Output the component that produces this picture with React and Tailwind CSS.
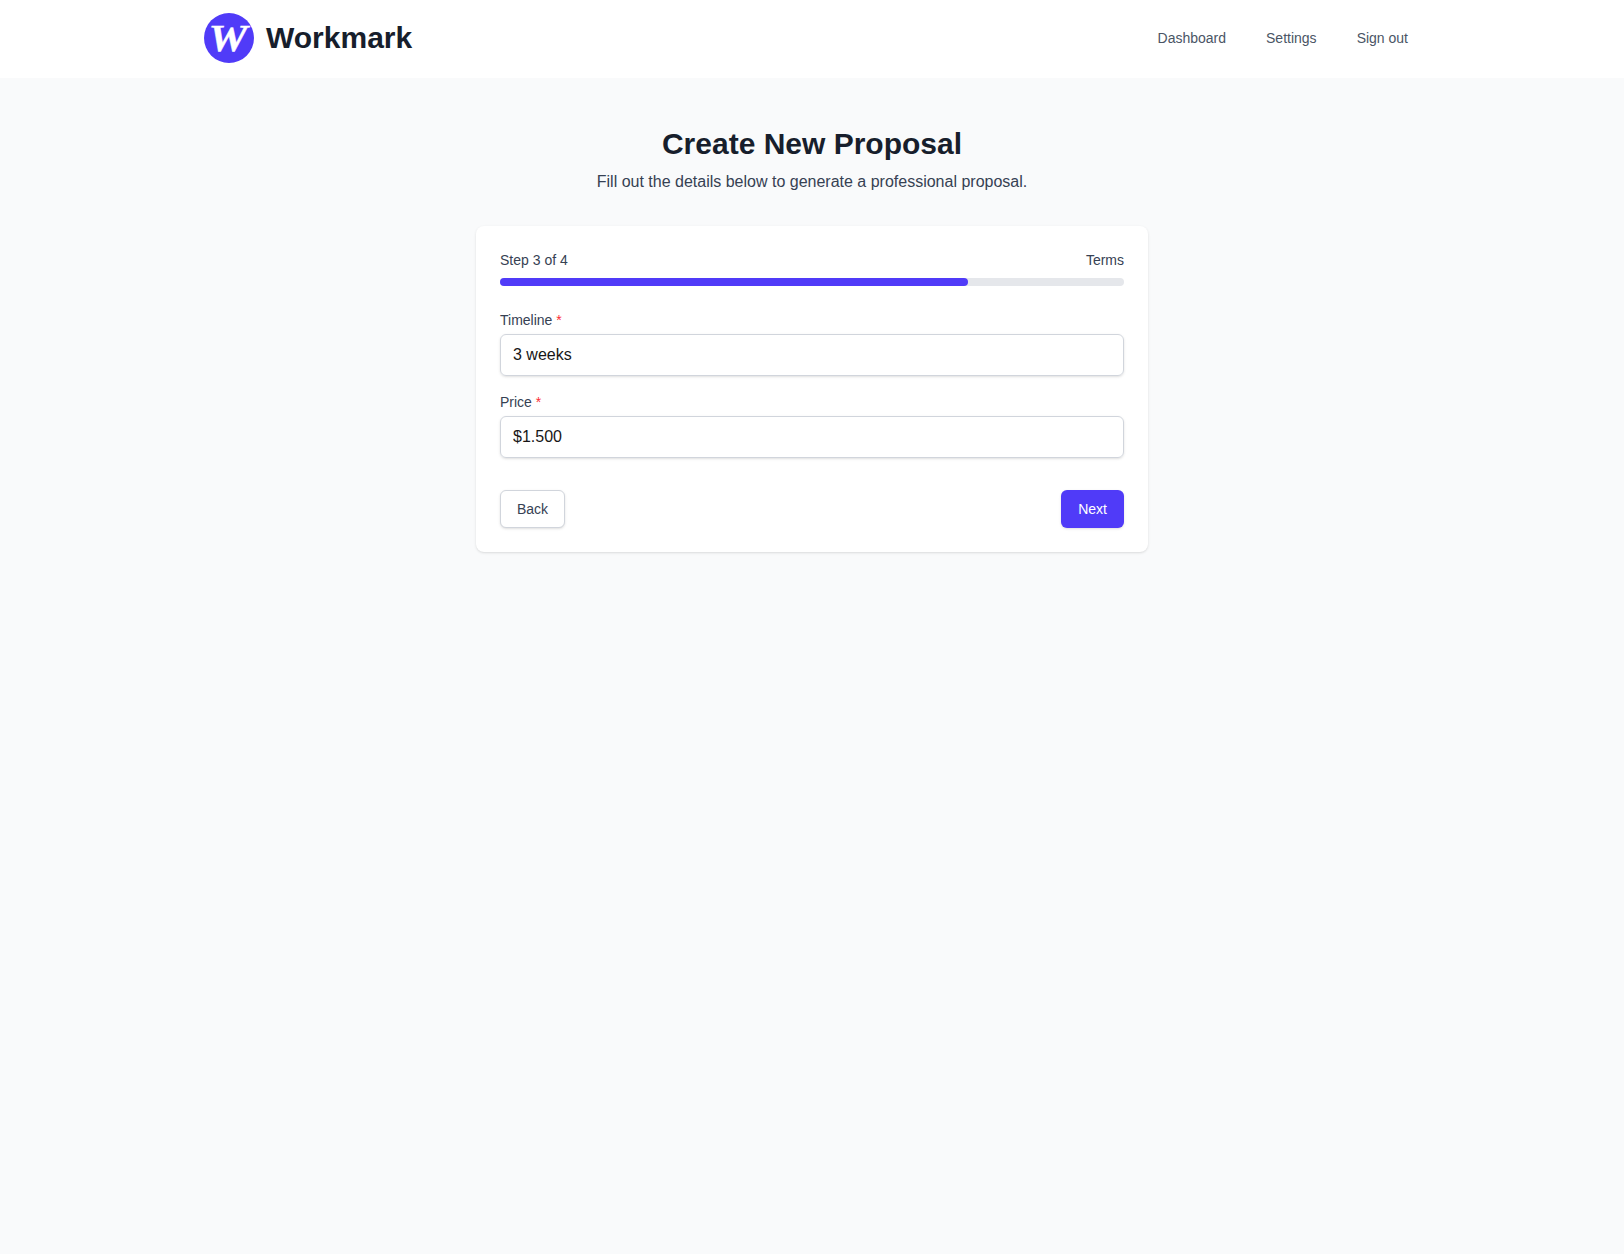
import { useState } from 'react'

const steps = ['Client', 'Project', 'Terms', 'Review']
const links = ['Dashboard', 'Settings', 'Sign out']

function Logo() {
  return (
    <svg width="50" height="50" viewBox="0 0 50 50" className="shrink-0">
      <circle cx="25" cy="25" r="25" fill="#503bf8" />
      <text
        x="4.6"
        y="38.3"
        fill="#fff"
        stroke="#fff"
        strokeWidth="0.4"
        fontFamily="'Liberation Serif', serif"
        fontSize="37.5"
        fontWeight="700"
        fontStyle="italic"
        textLength="38.8"
        lengthAdjust="spacingAndGlyphs"
      >
        W
      </text>
    </svg>
  )
}

function Navbar() {
  return (
    <nav className="bg-white">
      <div className="mx-auto flex h-[78px] max-w-7xl items-center justify-between px-8 pb-0.5">
        <div className="flex items-center gap-3">
          <Logo />
          <span className="text-3xl font-bold text-[#171e2c]">Workmark</span>
        </div>
        <div className="flex gap-4">
          {links.map((link) => (
            <a key={link} href="#" className="px-3 py-2 text-sm text-gray-600">{link}</a>
          ))}
        </div>
      </div>
    </nav>
  )
}

function Field({ label, value, onChange }) {
  return (
    <label className="block">
      <span className="block text-sm text-gray-700">
        {label} <span className="text-red-500">*</span>
      </span>
      <input
        type="text"
        value={value}
        onChange={(e) => onChange(e.target.value)}
        className="mt-1 block w-full rounded-md border border-gray-300 px-3 py-2 text-base text-[#171717] shadow-sm"
      />
    </label>
  )
}

function App() {
  const [step, setStep] = useState(3)
  const [timeline, setTimeline] = useState('3 weeks')
  const [price, setPrice] = useState('$1.500')

  return (
    <div className="min-h-screen bg-gray-50 font-['Liberation_Sans',Arial,sans-serif]">
      <Navbar />
      <main className="mx-auto max-w-2xl py-12">
        <div className="text-center">
          <h1 className="text-3xl font-bold text-[#171e2c]">Create New Proposal</h1>
          <p className="mt-2 text-gray-700">Fill out the details below to generate a professional proposal.</p>
        </div>

        <div className="mt-8 rounded-lg bg-white p-6 shadow-sm">
          <div className="flex justify-between text-sm text-gray-700">
            <span>Step {step} of {steps.length}</span>
            <span>{steps[step - 1]}</span>
          </div>
          <div className="mt-2 h-2 rounded-full bg-gray-200">
            <div
              className="h-2 rounded-full bg-[#503bf8]"
              style={{ width: `${(step / steps.length) * 100}%` }}
            />
          </div>

          <div className="mt-6 space-y-4">
            <Field label="Timeline" value={timeline} onChange={setTimeline} />
            <Field label="Price" value={price} onChange={setPrice} />
          </div>

          <div className="mt-8 flex justify-between">
            <button
              onClick={() => setStep(Math.max(1, step - 1))}
              className="rounded-md border border-gray-300 bg-white px-4 py-2 text-sm text-gray-700 shadow-sm"
            >
              Back
            </button>
            <button
              onClick={() => setStep(Math.min(steps.length, step + 1))}
              className="rounded-md border border-transparent bg-[#503bf8] px-4 py-2 text-sm text-white shadow-sm"
            >
              Next
            </button>
          </div>
        </div>
      </main>
    </div>
  )
}

export default App
